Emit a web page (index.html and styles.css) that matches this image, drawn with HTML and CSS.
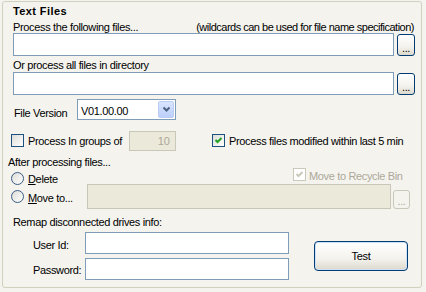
FILE: index.html
```html
<!DOCTYPE html>
<html>
<head>
    <title>Text Files</title>
    <link rel="stylesheet" href="styles.css">
</head>

<body>
    <div class="frame">
        <div class="title">Text Files</div>

        <div class="caption-row">
            <span>Process the following files...</span>
            <span>(wildcards can be used for file name specification)</span>
        </div>
        <div class="path-row">
            <input type="text" class="path-input">
            <button class="btn-browse">...</button>
        </div>

        <div class="caption">Or process all files in directory</div>
        <div class="path-row">
            <input type="text" class="path-input">
            <button class="btn-browse">...</button>
        </div>

        <!-- version -->
        <div class="version-row">
            <span class="version-label">File Version</span>
            <div class="combo">
                <span class="combo-value">V01.00.00</span>
                <span class="combo-arrow">
                    <svg width="9" height="7" viewBox="0 0 9 7"><path d="M1.5 1.5 L4.5 4.5 L7.5 1.5" fill="none" stroke="#4d6185" stroke-width="2"/></svg>
                </span>
            </div>
        </div>

        <div class="options-row">
            <span class="check"></span>
            <span class="opt-label groups-label">Process In groups of</span>
            <input type="text" class="groups-input" value="10" disabled>
            <span class="check modified-check">
                <svg width="11" height="11" viewBox="0 0 11 11"><path d="M2.5 5 L4.5 7 L8.5 3" fill="none" stroke="#21a121" stroke-width="2"/></svg>
            </span>
            <span class="opt-label">Process files modified within last 5 min</span>
        </div>

        <div class="after-caption">After processing files...</div>

        <div class="delete-row">
            <span class="radio"></span>
            <span class="radio-label"><u>D</u>elete</span>
            <div class="recycle">
                <span class="check disabled">
                    <svg width="11" height="11" viewBox="0 0 11 11"><path d="M2.5 5 L4.5 7 L8.5 3" fill="none" stroke="#cac8bb" stroke-width="2"/></svg>
                </span>
                <span class="recycle-label">Move to Recycle Bin</span>
            </div>
        </div>

        <div class="move-row">
            <span class="radio"></span>
            <span class="radio-label move-label"><u>M</u>ove to...</span>
            <input type="text" class="move-input" disabled>
            <button class="btn-browse btn-disabled" disabled>...</button>
        </div>

        <div class="caption remap">Remap disconnected drives info:</div>

        <!-- login -->
        <div class="login">
            <div class="login-fields">
                <div class="field">
                    <label for="userId">User Id:</label>
                    <input type="text" id="userId">
                </div>
                <div class="field field-pass">
                    <label for="password">Password:</label>
                    <input type="password" id="password">
                </div>
            </div>
            <button class="btn-test">Test</button>
        </div>
    </div>
</body>
</html>
```

FILE: styles.css
```css
/* General Styles */
body {
    margin: 0;
    background-color: #f4f3ee;
    font-family: "Liberation Sans", Arial, sans-serif;
    font-size: 11px;
    letter-spacing: -0.35px;
    color: #000;
}

.frame {
    box-sizing: border-box;
    height: 287px;
    margin: 1px 4px 0 2px;
    border: 1px solid #d0d0bf;
    border-radius: 3px;
}

.title {
    margin: 3px 0 0 10px;
    height: 13px;
    line-height: 13px;
    font-weight: bold;
    letter-spacing: 0.4px;
}

.caption-row {
    display: flex;
    justify-content: space-between;
    margin: 3px 7px 0 10px;
    height: 12px;
    line-height: 12px;
}

.caption-row span:last-child {
    letter-spacing: -0.5px;
}

.caption {
    margin: 3px 0 0 10px;
    height: 13px;
    line-height: 13px;
}

/* Path Rows */
.path-row {
    display: flex;
    align-items: flex-start;
    margin-left: 10px;
    height: 23px;
}

input {
    box-sizing: border-box;
    margin: 0;
    padding: 0 3px;
    border: 1px solid #7f9db9;
    background-color: #fff;
    font-family: inherit;
    font-size: 11px;
    outline: none;
}

.path-input {
    width: 381px;
    height: 23px;
}

button {
    box-sizing: border-box;
    margin: 0;
    padding: 0;
    font-family: inherit;
    font-size: 11px;
    letter-spacing: -0.35px;
    color: #000;
    border: 1px solid #003c74;
    border-radius: 3px;
    background: linear-gradient(#ffffff, #f3f2ed 60%, #dcd8cc);
}

.btn-browse {
    width: 18px;
    height: 22px;
    margin: 1px 0 0 3px;
    padding-top: 6px;
    line-height: 13px;
}

.btn-disabled {
    width: 17px;
    height: 19px;
    margin-top: 6px;
    margin-left: 2px;
    padding-top: 4px;
    color: #aca899;
    border-color: #c9c7ba;
    background: #f4f3ee;
}

/* Version */
.version-row {
    display: flex;
    align-items: flex-start;
    margin-top: 4px;
    height: 21px;
}

.version-label {
    width: 63px;
    margin: 8px 0 0 11px;
    line-height: 13px;
}

.combo {
    box-sizing: border-box;
    display: flex;
    justify-content: space-between;
    width: 99px;
    height: 21px;
    border: 1px solid #7f9db9;
    background-color: #fff;
}

.combo-value {
    margin: 5px 0 0 3px;
    line-height: 13px;
}

.combo-arrow {
    box-sizing: border-box;
    display: flex;
    align-items: center;
    justify-content: center;
    width: 16px;
    height: 17px;
    margin: 1px;
    border: 1px solid #bccdf5;
    border-radius: 2px;
    background: linear-gradient(#d9e4ff, #bccffa);
}

/* Check Boxes and Radios */
.check {
    box-sizing: border-box;
    display: inline-flex;
    align-items: center;
    justify-content: center;
    width: 13px;
    height: 13px;
    border: 1px solid #1c5180;
    background: linear-gradient(135deg, #dcdcd7, #ffffff);
}

.check.disabled {
    border-color: #cac8bb;
    background: #fff;
}

.radio {
    box-sizing: border-box;
    width: 13px;
    height: 13px;
    margin: 4px 0 0 8px;
    border: 1px solid #3a5c84;
    border-radius: 50%;
    background: linear-gradient(135deg, #dcdcd7, #ffffff);
}

.options-row {
    display: flex;
    align-items: flex-start;
    margin-top: 11px;
    height: 20px;
}

.options-row .check {
    margin: 3px 0 0 8px;
}

.opt-label {
    margin: 4px 0 0 4px;
    line-height: 13px;
}

.groups-label {
    width: 101px;
}

.groups-input {
    width: 47px;
    height: 20px;
    padding-right: 5px;
    text-align: right;
    color: #aca899;
    border-color: #c9c7ba;
    background-color: #ebe9d9;
}

.options-row .modified-check {
    margin-left: 36px;
}

.after-caption {
    margin: 5px 0 0 5px;
    height: 12px;
    line-height: 12px;
}

/* After Processing */
.delete-row {
    display: flex;
    align-items: flex-start;
    height: 16px;
}

.radio-label {
    margin: 5px 0 0 4px;
    line-height: 13px;
}

.recycle {
    display: flex;
    align-items: flex-start;
    margin: 0 0 0 auto;
    width: 128px;
}

.recycle-label {
    margin: 2px 0 0 3px;
    line-height: 13px;
    color: #aca899;
}

.move-row {
    display: flex;
    align-items: flex-start;
    height: 25px;
}

.move-row .radio {
    margin-top: 6px;
}

.move-label {
    width: 59px;
    margin-top: 8px;
}

.move-input {
    width: 304px;
    height: 25px;
    border-color: #c9c7ba;
    background-color: #ebe9d9;
}

.remap {
    margin-top: 7px;
}

/* Login */
.login {
    display: flex;
    align-items: flex-start;
    margin-top: 3px;
}

.field {
    display: flex;
    align-items: flex-start;
    height: 22px;
}

.field-pass {
    margin-top: 4px;
}

.field label {
    width: 52px;
    margin: 7px 0 0 30px;
    line-height: 13px;
}

.field-pass label {
    margin-top: 6px;
}

.field input {
    width: 204px;
    height: 22px;
}

.btn-test {
    width: 94px;
    height: 30px;
    margin: 9px 0 0 25px;
    line-height: 13px;
    border-radius: 4px;
    box-shadow: inset 0 0 0 1px #cfe0fb;
}
```
